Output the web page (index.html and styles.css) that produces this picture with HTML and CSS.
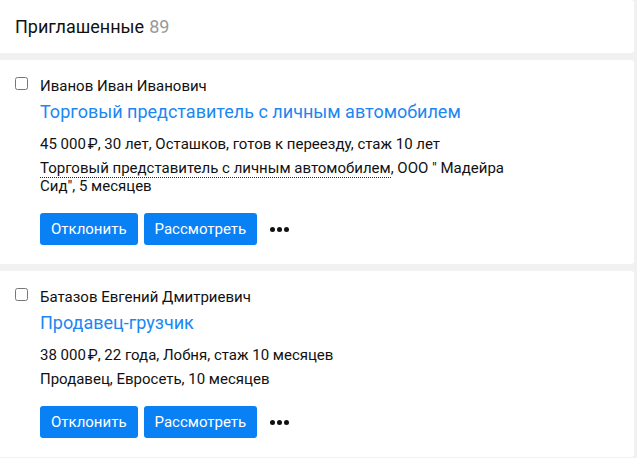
FILE: index.html
```html
<!DOCTYPE html>
<html lang="ru">
<head>
<meta charset="utf-8">
<link rel="stylesheet" href="styles.css">
</head>
<body>
<div class="page">
  <div class="panel header">
    <span class="header-title">Приглашенные</span>
    <span class="header-count">89</span>
  </div>

  <div class="panel card">
    <input type="checkbox" class="check">
    <div class="content">
      <div class="name">Иванов Иван Иванович</div>
      <a class="title" href="#">Торговый представитель с личным автомобилем</a>
      <p class="info">45 000&#8239;₽, 30 лет, Осташков, готов к переезду, стаж 10 лет</p>
      <p class="info exp"><span class="dotted">Торговый представитель с личным автомобилем</span>, ООО " Мадейра Сид", 5 месяцев</p>
      <div class="actions">
        <button class="btn">Отклонить</button>
        <button class="btn">Рассмотреть</button>
        <span class="more"><i></i><i></i><i></i></span>
      </div>
    </div>
  </div>

  <div class="panel card">
    <input type="checkbox" class="check">
    <div class="content">
      <div class="name">Батазов Евгений Дмитриевич</div>
      <a class="title" href="#">Продавец-грузчик</a>
      <p class="info">38 000&#8239;₽, 22 года, Лобня, стаж 10 месяцев</p>
      <p class="info exp">Продавец, Евросеть, 10 месяцев</p>
      <div class="actions">
        <button class="btn">Отклонить</button>
        <button class="btn">Рассмотреть</button>
        <span class="more"><i></i><i></i><i></i></span>
      </div>
    </div>
  </div>
</div>
</body>
</html>
```

FILE: styles.css
```css
* { box-sizing: border-box; }
html, body {
  margin: 0;
  padding: 0;
  background: #f1f1f1;
  font-family: Roboto, "Noto Sans", Arial, sans-serif;
  color: #111;
}
.page {
  width: 634px;
  display: flex;
  flex-direction: column;
  gap: 7px;
}
.panel {
  background: #fff;
  border-radius: 0 3px 3px 0;
}
.header {
  height: 53px;
  display: flex;
  align-items: center;
  padding: 0 15px 1px;
  gap: 5px;
  font-size: 18px;
}
.header-count { color: #999; }
.card {
  display: flex;
  align-items: flex-start;
  padding: 16px 15px 19px;
}
.check {
  margin: 1px 12px 0 0;
  width: 13px;
  height: 13px;
}
.content {
  display: flex;
  flex-direction: column;
  max-width: 475px;
}
.name {
  font-size: 15px;
  line-height: 20px;
}
.title {
  font-size: 18px;
  line-height: 32px;
  color: #1a87f2;
  text-decoration: none;
}
.info {
  margin: 0;
  font-size: 15px;
  line-height: 18px;
}
.title + .info { margin-top: 7px; }
.info.exp { margin-top: 6px; }
.dotted {
  border-bottom: 1px dotted #222;
}
.actions {
  display: flex;
  align-items: center;
  gap: 6px;
  margin-top: 18px;
}
.btn {
  height: 32px;
  padding: 0 11px;
  border: none;
  border-radius: 3px;
  background: #0a80f5;
  color: #fff;
  font-family: inherit;
  font-size: 15px;
}
.more {
  display: flex;
  gap: 2px;
  margin-left: 7px;
}
.more i {
  width: 5px;
  height: 5px;
  border-radius: 50%;
  background: #111;
}
```
